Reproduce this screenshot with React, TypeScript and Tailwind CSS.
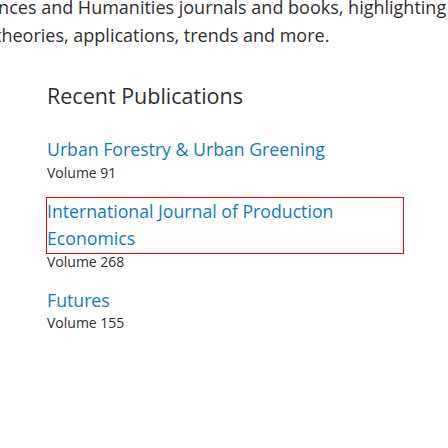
const pubs = [
  { title: "Urban Forestry & Urban Greening", volume: "Volume 91" },
  { title: "International Journal of Production Economics", volume: "Volume 268", focused: true },
  { title: "Futures", volume: "Volume 155" },
];

export default function App() {
  return (
    <div className="h-[448px] w-[448px] overflow-hidden bg-white font-['Open_Sans',sans-serif] text-[#2e2e2e]">
      {/* intro paragraph, centred and wider than the view, so both edges are cut */}
      <div className="-mt-[7px] whitespace-nowrap text-[18px] leading-[28px]">
        <div className="-ml-[12px]">ences and Humanities journals and books, highlighting</div>
        <div className="-ml-[5px]">theories, applications, trends and more.</div>
      </div>

      <div className="pl-[47px] pt-[33px]">
        <h2 className="text-[21.5px] leading-[28px]">Recent Publications</h2>
        <ul className="mt-[26px] flex flex-col gap-[16px]">
          {pubs.map((p) => (
            <li key={p.title}>
              <div
                className={`w-[356px] text-[17.7px] leading-[27.5px] text-[#0c7dbb] ${
                  p.focused ? "outline outline-1 outline-[#ff0000]" : ""
                }`}
              >
                {p.title}
              </div>
              <div className="text-[14px] leading-[18px]">{p.volume}</div>
            </li>
          ))}
        </ul>
      </div>
    </div>
  );
}
